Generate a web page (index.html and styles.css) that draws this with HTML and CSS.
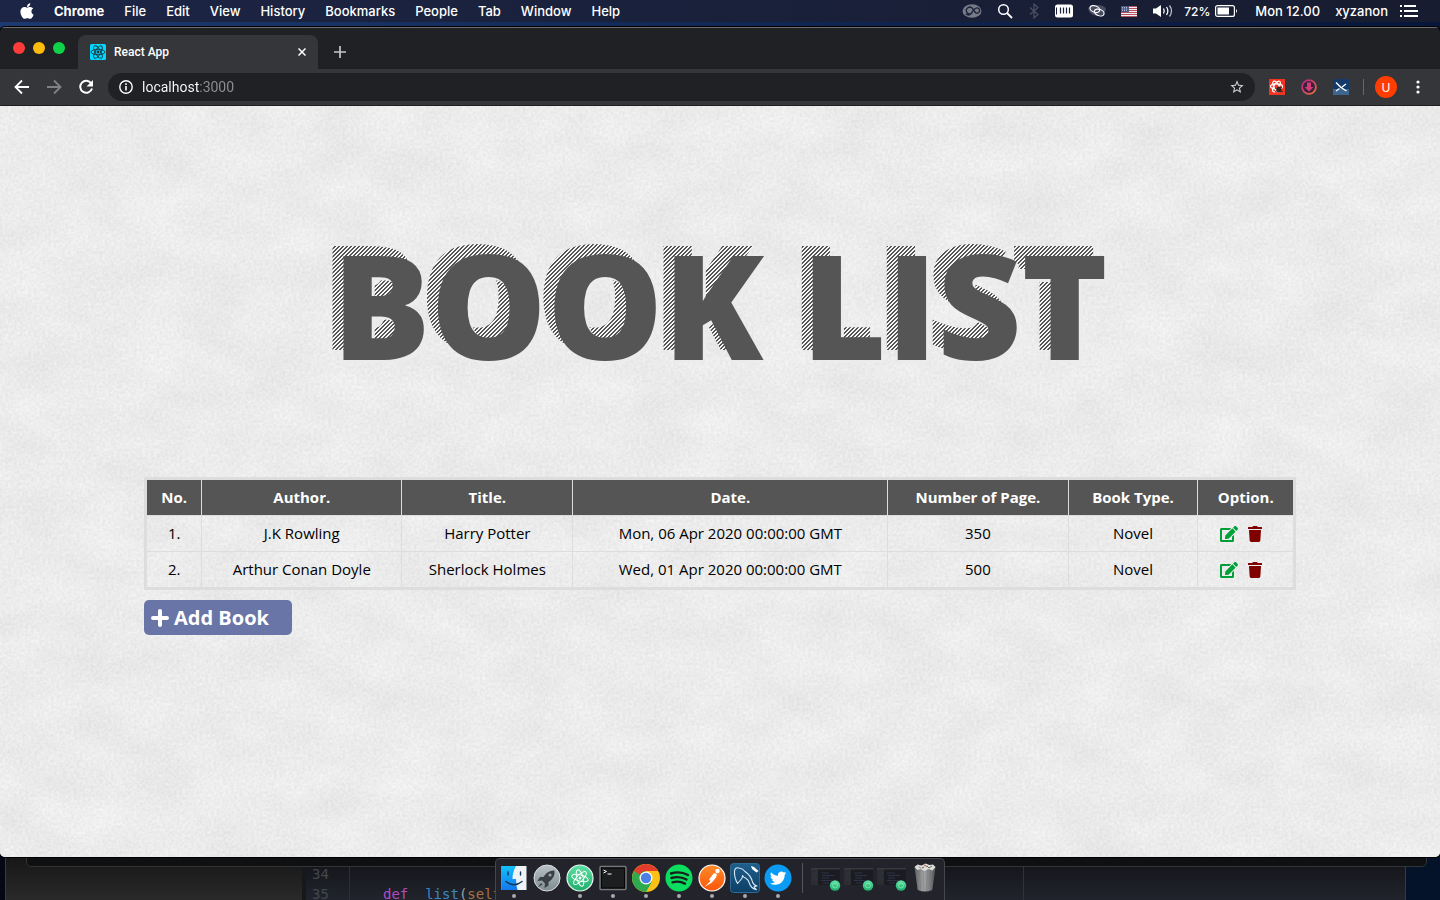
FILE: index.html
```html
<!DOCTYPE html>
<html lang="en">
<head>
<meta charset="utf-8">
<title>React App</title>
<link rel="stylesheet" href="styles.css">
</head>
<body>
<svg class="defs" aria-hidden="true">
  <defs>
    <linearGradient id="g-atom" x1="0" y1="0" x2="0" y2="1"><stop offset="0" stop-color="#5fe0a4"/><stop offset="1" stop-color="#1fae6c"/></linearGradient>
    <linearGradient id="g-rocket" x1="0" y1="0" x2="0" y2="1"><stop offset="0" stop-color="#b9c3c6"/><stop offset="1" stop-color="#7f8b90"/></linearGradient>
    <linearGradient id="g-finder" x1="0" y1="0" x2="0" y2="1"><stop offset="0" stop-color="#12c1fb"/><stop offset="1" stop-color="#1478ee"/></linearGradient>
    <linearGradient id="g-postman" x1="0" y1="0" x2="0" y2="1"><stop offset="0" stop-color="#ff8a2b"/><stop offset="1" stop-color="#fb5607"/></linearGradient>
    <linearGradient id="g-mysql" x1="0" y1="0" x2="0" y2="1"><stop offset="0" stop-color="#1f5f8c"/><stop offset="1" stop-color="#0d3f66"/></linearGradient>
    <linearGradient id="g-trash" x1="0" y1="0" x2="1" y2="0"><stop offset="0" stop-color="#5d5f60"/><stop offset=".45" stop-color="#a4a6a7"/><stop offset="1" stop-color="#515354"/></linearGradient>
    <linearGradient id="g-dl" x1="0" y1="0" x2="1" y2="1"><stop offset="0" stop-color="#b0208c"/><stop offset="1" stop-color="#e8743c"/></linearGradient>
    <filter id="plaster" x="0" y="0" width="100%" height="100%" color-interpolation-filters="sRGB">
      <feTurbulence type="fractalNoise" baseFrequency=".35" numOctaves="2" seed="4" result="f"/>
      <feColorMatrix in="f" values=".17 0 0 0 .845 .17 0 0 0 .845 .17 0 0 0 .845 0 0 0 0 1" result="fine"/>
      <feTurbulence type="fractalNoise" baseFrequency=".016 .026" numOctaves="4" seed="21" result="c"/>
      <feColorMatrix in="c" values=".11 0 0 0 .86 .11 0 0 0 .86 .11 0 0 0 .86 0 0 0 0 1" result="coarse"/>
      <feComposite in="fine" in2="coarse" operator="arithmetic" k2=".5" k3=".5"/>
    </filter>
    <symbol id="i-edit" viewBox="0 0 576 512"><path d="M402.600 83.200l90.200 90.200c3.800 3.800 3.800 10 0 13.800L274.400 405.600l-92.800 10.300c-12.400 1.400-22.900-9.100-21.500-21.500l10.300-92.800L388.800 83.200c3.800-3.800 10-3.800 13.800 0zm162-22.900l-48.800-48.800c-15.200-15.200-39.900-15.200-55.200 0l-35.400 35.400c-3.800 3.800-3.800 10 0 13.800l90.200 90.200c3.800 3.800 10 3.800 13.800 0l35.400-35.400c15.200-15.300 15.200-40 0-55.200zM384 346.200V448H64V128h229.800c3.200 0 6.200-1.300 8.500-3.500l40-40c7.600-7.600 2.200-20.500-8.500-20.500H48C21.500 64 0 85.500 0 112v352c0 26.500 21.500 48 48 48h352c26.500 0 48-21.500 48-48V306.200c0-10.700-12.900-16-20.500-8.500l-40 40c-2.200 2.300-3.500 5.300-3.500 8.500z"/></symbol>
    <symbol id="i-trash" viewBox="0 0 448 512"><path d="M432 32H312l-9.400-18.700A24 24 0 0 0 281.100 0H166.800a23.700 23.700 0 0 0-21.400 13.300L136 32H16A16 16 0 0 0 0 48v32a16 16 0 0 0 16 16h416a16 16 0 0 0 16-16V48a16 16 0 0 0-16-16zM53.200 467a48 48 0 0 0 47.900 45h245.800a48 48 0 0 0 47.900-45L416 128H32z"/></symbol>
    <symbol id="i-thumb" viewBox="0 0 30 24">
      <rect x="0" y="1" width="29" height="17" fill="#1b1c22"/><rect x="0" y="1" width="7" height="17" fill="#2c2c31"/><rect x="0" y="1" width="29" height="1.500" fill="#38383e"/>
      <path d="M2 6h4M2 9h3M2 12h4M10 6h8M11 8.500h12M11 11h7M10 13.500h11M12 16h6" stroke="#343850" stroke-width=".8"/>
      <circle cx="24" cy="18.500" r="5.200" fill="url(#g-atom)"/><circle cx="24" cy="18.500" r="2.500" fill="none" stroke="#8df0c0" stroke-width=".7"/>
    </symbol>
  </defs>
</svg>

<header class="menubar">
  <nav class="menus">
    <svg class="apple" viewBox="0 0 384 512" fill="#fff"><path d="M318.700 268.700c-.2-36.700 16.400-64.400 50-84.800-18.800-26.900-47.200-41.700-84.700-44.600-35.500-2.800-74.300 20.700-88.500 20.700-15 0-49.400-19.700-76.400-19.700C63.300 141.200 4 184.800 4 273.500q0 39.300 14.400 81.200c12.800 36.700 59 126.700 107.200 125.200 25.200-.6 43-17.900 75.800-17.900 31.800 0 48.300 17.900 76.400 17.900 48.600-.7 90.400-82.500 102.600-119.300-65.200-30.700-61.700-90-61.700-91.900zm-56.600-164.200c27.300-32.400 24.800-61.900 24-72.500-24.100 1.400-52 16.400-67.900 34.900-17.500 19.800-27.800 44.300-25.600 71.900 26.100 2 49.900-11.400 69.500-34.300z"/></svg>
    <b>Chrome</b><span>File</span><span>Edit</span><span>View</span><span>History</span><span>Bookmarks</span><span>People</span><span>Tab</span><span>Window</span><span>Help</span>
  </nav>
  <div class="status">
    <div class="tray">
      <svg width="20" height="16" viewBox="0 0 20 16"><ellipse cx="10" cy="8" rx="9.500" ry="6.800" fill="#777b88"/><path d="M9.500 10.500a3.400 3.400 0 1 1 1-5l3 4.200a2.600 2.600 0 1 0 .2-4.400c-1.500.8-3.600 4-5 5.800-1.600 1.600-4 .8-5-.4" fill="none" stroke="#1a2038" stroke-width="1.300"/></svg>
      <svg width="16" height="16" viewBox="0 0 16 16" fill="none" stroke="#fff"><circle cx="6.500" cy="6.500" r="4.800" stroke-width="1.500"/><path d="M10 10l5 5" stroke-width="1.800"/></svg>
      <svg width="12" height="16" viewBox="0 0 12 16" fill="none" stroke="#4b5064" stroke-width="1.200"><path d="M2 4.500l8 7L6 15V1l4 3.500-8 7"/></svg>
      <svg width="18" height="16" viewBox="0 0 18 16"><rect x="0" y="1.500" width="18" height="13" rx="2.500" fill="#fff"/><path d="M1.500 4.500v7" stroke="#1a2038" stroke-width="1"/><path d="M5.500 4.500v6M8.500 4.500v6M11.500 4.500v6M14.500 4.500v6" stroke="#1a2038" stroke-width="1.200"/></svg>
      <svg width="18" height="16" viewBox="0 0 18 16"><path d="M0 6q2-4 9-4t9 4q-1 6-9 7Q2 12 0 6" fill="#484d62"/><g fill="none" stroke="#fff" stroke-width="1.200"><ellipse cx="6.800" cy="6" rx="5" ry="3.200" transform="rotate(20 6.800 6)"/><ellipse cx="11.200" cy="9.500" rx="5" ry="3.200" transform="rotate(20 11.200 9.500)"/></g></svg>
      <svg width="16" height="11" viewBox="0 0 16 11"><rect width="16" height="11" fill="#f4f0f2"/><path d="M0 .5h16M0 2.500h16M0 4.500h16M0 6.500h16M0 8.500h16M0 10.500h16" stroke="#b5525f" stroke-width="1"/><rect width="8" height="6" fill="#4a5787"/><path d="M1 1.500h6M1 3h6M1 4.500h6" stroke="#dfe4f2" stroke-width=".7" stroke-dasharray="1 1"/></svg>
      <svg width="22" height="16" viewBox="0 0 22 16"><path d="M1 5.500h3L9 2v12l-5-3.500H1z" fill="#fff"/><g fill="none" stroke="#fff" stroke-width="1.300"><path d="M11.500 5.500q1.500 2.500 0 5M14.500 4q2.700 4 0 8"/><path d="M17.500 2.500q4 5.500 0 11" stroke="#b9bcc6"/></g></svg>
    </div>
    <span class="charge">72%
      <svg width="23" height="12" viewBox="0 0 23 12"><rect x=".6" y=".6" width="18.800" height="10.800" rx="2" fill="none" stroke="#fff" stroke-width="1.200"/><rect x="2.500" y="2.500" width="11.500" height="7" fill="#fff"/><path d="M21 4q2 2 0 4z" fill="#fff"/></svg>
    </span>
    <span class="clock">Mon 12.00</span>
    <span class="user">xyzanon
      <svg width="18" height="12" viewBox="0 0 18 12" stroke="#fff" stroke-width="1.800"><path d="M0 1h2M4 1h12M0 6h2M4 6h14M0 11h2M4 11h14"/></svg>
    </span>
  </div>
</header>

<div class="editor" aria-hidden="true">
  <div class="sidebar"></div>
  <pre class="code"><i>34</i>
<i>35</i>     <b>def</b>  <em>list</em>(<u>self</u></pre>
  <div class="guide"></div>
</div>
<div class="panel"></div>

<section class="window">
  <div class="tabstrip">
    <div class="lights"><button aria-label="Close window"></button><button aria-label="Minimise"></button><button aria-label="Full screen"></button></div>
    <div class="tab">
      <svg width="16" height="16" viewBox="0 0 16 16"><rect width="16" height="16" rx="1.500" fill="#00d8ff"/><g fill="none" stroke="#20343c" stroke-width=".9"><ellipse cx="8" cy="8" rx="7" ry="2.700"/><ellipse cx="8" cy="8" rx="7" ry="2.700" transform="rotate(60 8 8)"/><ellipse cx="8" cy="8" rx="7" ry="2.700" transform="rotate(120 8 8)"/></g><circle cx="8" cy="8" r="1.400" fill="#20343c"/></svg>
      <span>React App</span>
      <button aria-label="Close tab"><svg width="8" height="8" viewBox="0 0 8 8" stroke="#fff" stroke-width="1.500"><path d="M.5.500l7 7M7.500.500l-7 7"/></svg></button>
    </div>
    <button class="newtab" aria-label="New tab"><svg width="12" height="12" viewBox="0 0 12 12" stroke="#c4c7ca" stroke-width="1.700"><path d="M6 0v12M0 6h12"/></svg></button>
  </div>
  <div class="toolbar">
    <button aria-label="Back"><svg width="16" height="16" viewBox="0 0 16 16" fill="none" stroke="#fff" stroke-width="1.800"><path d="M15 8H2M8 1.500L1.500 8 8 14.500"/></svg></button>
    <button aria-label="Forward"><svg width="16" height="16" viewBox="0 0 16 16" fill="none" stroke="#808185" stroke-width="1.800"><path d="M1 8h13M8 1.500L14.500 8 8 14.500"/></svg></button>
    <button aria-label="Reload"><svg width="16" height="16" viewBox="0 0 16 16"><path d="M13.300 4.500A6 6 0 1 0 14 9.500" fill="none" stroke="#fff" stroke-width="2"/><path d="M15 1v6.500H8.500z" fill="#fff"/></svg></button>
    <div class="omnibox">
      <svg width="14" height="14" viewBox="0 0 14 14" fill="none" stroke="#fff" stroke-width="1.400"><circle cx="7" cy="7" r="6.200"/><path d="M7 6v4.500M7 3.300v1.600" stroke-width="1.600"/></svg>
      <input type="text" value="localhost:3000" aria-label="Address">
      <button aria-label="Bookmark"><svg width="16" height="16" viewBox="0 0 24 24" fill="#d0d1d3"><path d="M22 9.240l-7.190-.620L12 2 9.190 8.630 2 9.240l5.460 4.730L5.820 21 12 17.270 18.180 21l-1.630-7.030L22 9.240zM12 15.400l-3.760 2.270 1-4.280-3.320-2.880 4.380-.380L12 6.100l1.710 4.040 4.380.380-3.320 2.880 1 4.280L12 15.400z"/></svg></button>
    </div>
    <div class="extensions">
      <svg width="16" height="16" viewBox="0 0 16 16"><rect width="16" height="16" fill="#f1331f"/><g fill="none" stroke="#fff" stroke-width="1.200"><ellipse cx="7.500" cy="7.500" rx="6" ry="2.600"/><ellipse cx="7.500" cy="7.500" rx="6" ry="2.600" transform="rotate(60 7.500 7.500)"/><ellipse cx="7.500" cy="7.500" rx="6" ry="2.600" transform="rotate(120 7.500 7.500)"/></g><ellipse cx="10" cy="10.500" rx="2.600" ry="3" fill="#33221f"/><path d="M6 9l8 4M6 13l7-5" stroke="#33221f" stroke-width=".9"/></svg>
      <svg width="16" height="16" viewBox="0 0 16 16"><circle cx="8" cy="8" r="6.900" fill="#3a2138" stroke="url(#g-dl)" stroke-width="1.800"/><path d="M6 3.500h4V8h2.500L8 12.500 3.500 8H6z" fill="#d23b78"/></svg>
      <svg width="16" height="16" viewBox="0 0 16 16"><rect width="16" height="16" rx="1.500" fill="#123a6b"/><rect y="10" width="16" height="6" fill="#3c6590"/><path d="M3 3.500q4 5 10.500 8.500M3 12l3.500-2.500M9 8l4-3" fill="none" stroke="#fff" stroke-width="1.300"/></svg>
    </div>
    <span class="divider"></span>
    <button class="avatar" aria-label="Profile">U</button>
    <button class="more" aria-label="Menu"><svg width="4" height="14" viewBox="0 0 4 14" fill="#fff"><circle cx="2" cy="2" r="1.600"/><circle cx="2" cy="7" r="1.600"/><circle cx="2" cy="12" r="1.600"/></svg></button>
  </div>

  <main class="page">
    <svg class="texture" aria-hidden="true"><rect width="100%" height="100%" filter="url(#plaster)"/></svg>
    <h1 class="title" data-text="BOOK LIST">BOOK LIST</h1>
    <div class="content">
      <table class="books">
        <colgroup><col class="c-no"><col class="c-author"><col class="c-title"><col class="c-date"><col class="c-pages"><col class="c-type"><col class="c-option"></colgroup>
        <thead><tr><th>No.</th><th>Author.</th><th>Title.</th><th>Date.</th><th>Number of Page.</th><th>Book Type.</th><th>Option.</th></tr></thead>
        <tbody>
          <tr><td>1.</td><td>J.K Rowling</td><td>Harry Potter</td><td>Mon, 06 Apr 2020 00:00:00 GMT</td><td>350</td><td>Novel</td>
            <td><div class="options"><button class="edit" aria-label="Edit"><svg width="18" height="16"><use href="#i-edit"/></svg></button><button class="delete" aria-label="Delete"><svg width="14" height="16"><use href="#i-trash"/></svg></button></div></td></tr>
          <tr><td>2.</td><td>Arthur Conan Doyle</td><td>Sherlock Holmes</td><td>Wed, 01 Apr 2020 00:00:00 GMT</td><td>500</td><td>Novel</td>
            <td><div class="options"><button class="edit" aria-label="Edit"><svg width="18" height="16"><use href="#i-edit"/></svg></button><button class="delete" aria-label="Delete"><svg width="14" height="16"><use href="#i-trash"/></svg></button></div></td></tr>
        </tbody>
      </table>
      <button class="add"><svg width="18" height="18" viewBox="0 0 18 18" stroke="#fff" stroke-width="4" stroke-linecap="round"><path d="M9 2v14M2 9h14"/></svg>Add Book</button>
    </div>
  </main>
</section>

<footer class="dock">
  <div class="app running"><svg viewBox="0 0 30 30"><rect x="2.500" y="3" width="25" height="24" fill="#eef3f8"/><path d="M2.500 3H17q-3.500 6-3.500 13h3.500q0 6 1.500 11h-16z" fill="url(#g-finder)"/><path d="M9 9v3M21.500 9v3M7 18.500q8 6.500 16 0" fill="none" stroke="#15324f" stroke-width="1.400" stroke-linecap="round"/></svg></div>
  <div class="app"><svg viewBox="0 0 30 30"><circle cx="15" cy="15" r="13" fill="url(#g-rocket)" stroke="#d8dddf"/><path d="M22.500 7.500q-7-.5-11 6.500H8l-2.500 4 4.500-.500 3 3-.500 4.500 4-2.500v-3.500q7-4.500 6-11.500zM9 20l-3 4 4.500-2.500z" fill="#3a4145"/><circle cx="18" cy="12" r="1.600" fill="#9aa5a9"/></svg></div>
  <div class="app running"><svg viewBox="0 0 30 30"><circle cx="15" cy="15" r="13" fill="url(#g-atom)" stroke="#e9f7f0" stroke-width="1.200"/><g fill="none" stroke="#fff" stroke-width="1"><ellipse cx="15" cy="15" rx="8.500" ry="3.200" transform="rotate(15 15 15)"/><ellipse cx="15" cy="15" rx="8.500" ry="3.200" transform="rotate(75 15 15)"/><ellipse cx="15" cy="15" rx="8.500" ry="3.200" transform="rotate(135 15 15)"/></g><circle cx="15" cy="15" r="1.500" fill="#fff"/></svg></div>
  <div class="app running"><svg viewBox="0 0 30 30"><rect x="2" y="3.500" width="26" height="23" rx="1" fill="#1d1e20" stroke="#76797c" stroke-width="1.400"/><rect x="3.500" y="5" width="23" height="20" fill="none" stroke="#050505"/><path d="M5.500 7l3 1.500-3 1.500M9.500 11h4" fill="none" stroke="#fff" stroke-width="1"/></svg></div>
  <div class="app running"><svg viewBox="0 0 30 30"><circle cx="15" cy="15" r="14" fill="#fbc116"/><path d="M2.900 8A14 14 0 0 0 15 29l6-10.500H9z" fill="#2da94f"/><path d="M2.900 8L9 18.500 15 15V8z" fill="#2da94f"/><path d="M2.900 8A14 14 0 0 1 27.100 8H15a7 7 0 0 0-6.200 4z" fill="#e33b2e"/><path d="M2.900 8L9 18.500 8.800 12z" fill="#2da94f"/><circle cx="15" cy="15" r="6.500" fill="#fff"/><circle cx="15" cy="15" r="5.200" fill="#4a7fe8"/></svg></div>
  <div class="app running"><svg viewBox="0 0 30 30"><circle cx="15" cy="15" r="13.500" fill="#0bdd5f"/><path d="M7 10.500q9-2.800 17 1.500M7.500 15q8-2.300 15 1.500M8.500 19.300q6.500-1.800 12.500 1.300" fill="none" stroke="#16201b" stroke-width="2.400" stroke-linecap="round"/></svg></div>
  <div class="app running"><svg viewBox="0 0 30 30"><circle cx="15" cy="15" r="13" fill="url(#g-postman)" stroke="#fff" stroke-width="1.200"/><circle cx="20.500" cy="8" r="2.200" fill="#fff"/><path d="M20 11l-3-1-5 6.500 1.500 1.500-6 6 7.500-4.500 4-5z" fill="#fff"/></svg></div>
  <div class="app running"><svg viewBox="0 0 30 30"><rect x=".5" y=".5" width="29" height="29" rx="3" fill="url(#g-mysql)" stroke="#2d6b96"/><path d="M7.500 20.500Q4 14 4.500 8q.5-4 4.500-3 4 .5 6 3.500 6 4 7.500 10.500 1 3 4.500 4l-3 .8 2.500 3q-5.500-1.300-7-6.300-1-4-4-5.500-2-.5-3-2.500 0 3-1.500 4z" fill="none" stroke="#d6e6f2" stroke-width="1.100" stroke-linejoin="round"/><path d="M21 3l1 3 4.500 3.500L28.500 8 24 4z" fill="#fff"/></svg></div>
  <div class="app running"><svg viewBox="0 0 30 30"><circle cx="15" cy="15" r="13.500" fill="#0a9cf5"/><path transform="translate(7 7) scale(.68)" fill="#fff" d="M23.950 4.570a10 10 0 0 1-2.820.770 4.960 4.960 0 0 0 2.160-2.720c-.950.550-2 .950-3.130 1.180a4.920 4.920 0 0 0-8.380 4.480C7.690 8.090 4.070 6.130 1.640 3.160a4.900 4.900 0 0 0 1.520 6.570 4.900 4.900 0 0 1-2.230-.610v.060a4.920 4.920 0 0 0 3.950 4.830 5 5 0 0 1-2.210.080 4.940 4.940 0 0 0 4.600 3.420A9.870 9.870 0 0 1 0 19.540a14 14 0 0 0 7.550 2.210c9.050 0 14-7.500 14-13.980l-.020-.640a9.940 9.940 0 0 0 2.420-2.560z"/></svg></div>
  <span class="dock-line"></span>
  <div class="app"><svg viewBox="0 0 30 30"><use href="#i-thumb" y="4" width="30" height="24"/></svg></div>
  <div class="app"><svg viewBox="0 0 30 30"><use href="#i-thumb" y="4" width="30" height="24"/></svg></div>
  <div class="app"><svg viewBox="0 0 30 30"><use href="#i-thumb" y="4" width="30" height="24"/></svg></div>
  <div class="app"><svg viewBox="0 0 30 30"><path d="M4.500 4h21l-3.200 23q-7.300 3-14.600 0z" fill="url(#g-trash)"/><path d="M9 7l2 20M13 7l1 21M17.500 7l-1 21M21.500 7l-2 20" stroke="#7b7d7e" stroke-width=".6"/><path d="M4.500 4l3-2.500 4 1 4-2 4 1.500 3.500-.500 2.500 2.500-3 3.500-4-1.500-4 2-4-2-3 1z" fill="#dcdddd"/><path d="M9 3.500l2 2M14 2l3 1.500M19 5l3-2" stroke="#a4583e" stroke-width="1"/><path d="M12 5l2-1M17 3l2 2" stroke="#49705c" stroke-width="1"/></svg></div>
</footer>
</body>
</html>
```
FILE: styles.css
```css
* { box-sizing: border-box; }

body {
  margin: 0;
  min-height: 100vh;
  display: flex;
  flex-direction: column;
  position: relative;
  overflow: hidden;
  background: linear-gradient(90deg, #1c3a70, #07163a) top / 100% 60px no-repeat, linear-gradient(90deg, #030814, #04122a);
  font-family: Inter, "Liberation Sans", sans-serif;
  color: #fff;
}

button, input { font: inherit; color: inherit; border: 0; padding: 0; background: none; }
svg { display: block; flex: none; }
.defs { position: absolute; width: 0; height: 0; }

/* Menu bar */
.menubar {
  height: 22px;
  padding: 0 22px 0 20px;
  display: flex;
  align-items: center;
  justify-content: space-between;
  background: linear-gradient(90deg, #1c2545, #171c30);
  font-size: 13px;
  font-weight: 500;
  white-space: nowrap;
}
.menus { display: flex; align-items: center; gap: 20px; }
.menus b { font-weight: 700; }
.apple { width: 14px; height: 18px; }
.status, .tray, .charge, .user { display: flex; align-items: center; }
.tray { gap: 15px; }
.charge { margin-left: 10px; gap: 5px; font-size: 12px; }
.clock { margin-left: 17px; }
.user { margin-left: 15px; gap: 12px; }

/* Windows behind the browser */
.editor {
  position: absolute;
  left: 5px;
  right: 34px;
  bottom: 0;
  height: 60px;
  display: flex;
  border: 1px solid #3a3a3c;
  border-width: 0 1px;
  background: linear-gradient(#101114 20%, #22242d);
}
.sidebar { width: 300px; background: linear-gradient(#141414 20%, #2a2a2a); border-right: 4px solid #17181b; }
.code {
  margin: 0;
  padding: 24px 0 0 6px;
  width: 718px;
  font: 14px/20px "DejaVu Sans Mono", monospace;
  color: #9aa0ac;
  border-right: 1px solid #30323a;
}
.code i { font-style: normal; color: #434752; padding-right: 12px; }
.code b { font-weight: 400; color: #b04cc0; }
.code em { font-style: normal; color: #3b87c4; }
.code u { text-decoration: none; color: #a8703f; }
.guide { position: absolute; left: 343px; top: 0; bottom: 0; width: 1px; background: #2d2f37; }
.panel {
  position: absolute;
  left: 26px;
  right: 13px;
  bottom: 33px;
  height: 30px;
  background: #0f1012;
  border: 1px solid #333436;
  border-radius: 5px;
}

/* Browser window */
.window {
  flex: 1;
  margin: 5px 0 43px;
  display: flex;
  flex-direction: column;
  position: relative;
  overflow: hidden;
  border-radius: 5px;
  box-shadow: 0 0 0 1px #000;
  background: #202124;
}
.tabstrip {
  height: 42px;
  padding-left: 13px;
  display: flex;
  align-items: flex-end;
  border-top: 1px solid #6b6d70;
}
.lights { display: flex; gap: 8px; padding-bottom: 15px; }
.lights button { width: 12px; height: 12px; border-radius: 50%; background: #fc3b3b; }
.lights button:nth-child(2) { background: #fdbc0a; }
.lights button:nth-child(3) { background: #0fd14a; }
.tab {
  width: 240px;
  height: 34px;
  margin-left: 13px;
  padding: 0 12px;
  display: flex;
  align-items: center;
  gap: 8px;
  border-radius: 8px 8px 0 0;
  background: #35363a;
  font: 500 12px Roboto, sans-serif;
}
.tab button { margin-left: auto; }
.newtab { margin-left: 16px; padding-bottom: 11px; }
.toolbar {
  height: 37px;
  padding: 0 15px 0 12px;
  display: flex;
  align-items: center;
  background: #35363a;
  border-bottom: 1px solid #1d1e20;
}
.toolbar > button { width: 20px; margin-right: 12px; display: grid; place-items: center; }
.omnibox {
  flex: 1;
  height: 28px;
  padding: 0 10px 0 11px;
  display: flex;
  align-items: center;
  gap: 9px;
  border-radius: 14px;
  background: #202124;
  font-family: Roboto, sans-serif;
  font-size: 14px;
}
.omnibox input {
  flex: 1;
  color: transparent;
  background: linear-gradient(90deg, #fff 58px, #8f9194 58px);
  -webkit-background-clip: text;
  background-clip: text;
}
.extensions { display: flex; gap: 16px; margin-left: 14px; }
.divider { width: 1px; height: 16px; margin: 0 11px 0 14px; background: #66676b; }
.toolbar > .avatar {
  width: 22px;
  height: 22px;
  margin-right: 14px;
  border-radius: 50%;
  background: #ff3d00;
  font-size: 12px;
}
.toolbar > .more { width: 14px; margin: 0; }

/* Page */
.page { flex: 1; position: relative; z-index: 0; padding-top: 123px; background: #ebebeb; color: #000; text-align: center; }
.texture { position: absolute; inset: 0; width: 100%; height: 100%; z-index: -2; }
.title {
  position: relative;
  z-index: 0;
  display: inline-block;
  margin: 0 0 98px;
  font: 800 146px/150px "Open Sans", sans-serif;
  white-space: nowrap;
  vertical-align: top;
  color: #555;
  text-shadow: 3px 3px 0 #ececec;
}
.title::before {
  content: attr(data-text);
  position: absolute;
  left: -11px;
  top: -10px;
  z-index: -1;
  color: transparent;
  text-shadow: none;
  background: linear-gradient(135deg, #555 25%, #f6f6f6 25%, #f6f6f6 50%, #555 50%, #555 75%, #f6f6f6 75%) 0 0 / 4px 4px;
  -webkit-background-clip: text;
  background-clip: text;
}
.content { width: 80%; margin: 0 auto; text-align: left; font-family: "Open Sans", sans-serif; }
.books {
  width: 100%;
  table-layout: fixed;
  border-collapse: collapse;
  border: 3px solid #ddd;
  font-size: 15px;
  line-height: 35px;
  text-align: center;
}
.books th, .books td { padding: 0; border: 1px solid #ddd; }
.books th { background: #555; color: #fff; font-weight: 700; }
.c-no { width: 4.9%; }
.c-author { width: 17.4%; }
.c-title { width: 14.9%; }
.c-date { width: 27.4%; }
.c-pages { width: 15.7%; }
.c-type { width: 11.3%; }
.c-option { width: 8.4%; }
.options { display: flex; justify-content: center; align-items: center; gap: 10px; padding-right: 9px; }
.edit { fill: #00a038; }
.delete { fill: #800000; }
.add {
  height: 35px;
  margin-top: 10px;
  padding: 0 23px 0 7px;
  display: flex;
  align-items: center;
  gap: 5px;
  border-radius: 5px;
  background: #6975a6;
  color: #fff;
  font-size: 20px;
  font-weight: 700;
}

/* Dock */
.dock {
  position: absolute;
  bottom: 0;
  left: 50%;
  transform: translateX(-50%);
  height: 42px;
  padding: 4px 3px 0 1px;
  display: flex;
  border: 1px solid #46474c;
  border-bottom: 0;
  border-radius: 5px 5px 0 0;
  background: #23242b;
}
.app { width: 33px; display: flex; flex-direction: column; align-items: center; }
.app svg { width: 30px; height: 30px; }
.running::after { content: ""; width: 4px; height: 4px; margin-top: 1px; border-radius: 50%; background: #a9aaad; }
.dock-line { width: 1px; height: 30px; margin: 0 6px 0 8px; background: #55565c; }
```
